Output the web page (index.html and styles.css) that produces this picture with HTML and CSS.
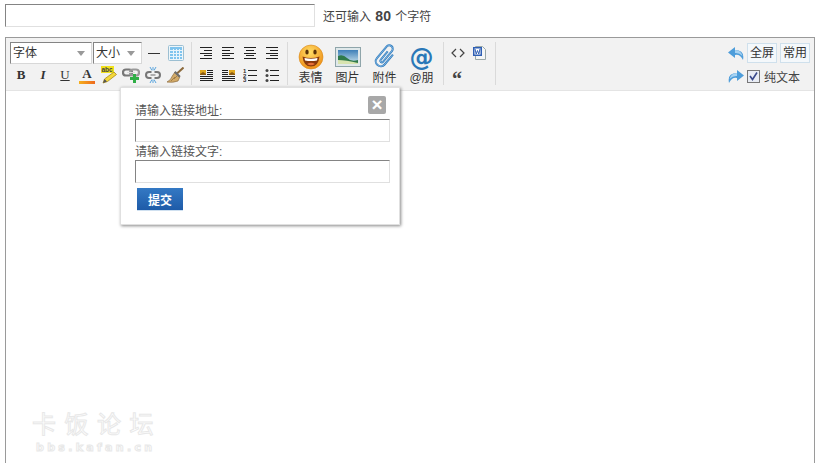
FILE: index.html
```html
<!DOCTYPE html>
<html>
<head>
    <title>发表帖子</title>
    <meta charset="UTF-8">
    <link rel="stylesheet" href="styles.css">
</head>
<body>
    <div class="title_row">
        <input class="px title_input">
        <span class="title_hint">还可输入 <strong>80</strong> 个字符</span>
    </div>

    <div class="editor">
        <div class="toolbar">
            <div class="group group_format">
                <div class="row">
                    <div class="select select_font">字体<i class="caret"></i></div>
                    <div class="select select_size">大小<i class="caret"></i></div>
                    <span class="rule_icon"></span>
                    <svg class="table_icon" width="16" height="16" viewBox="0 0 16 16">
                        <rect x=".5" y=".5" width="15" height="15" rx="1" fill="#EEF6FA" stroke="#9CBFD2"/>
                        <rect x="2" y="2" width="12" height="12" fill="#7FC4EE"/>
                        <path d="M2 5.500h12M2 8.500h12M2 11.500h12M5.500 4v10M8.500 4v10M11.500 4v10" stroke="#E8F4FB"/>
                    </svg>
                </div>
                <div class="row row_small">
                    <b class="cell glyph">B</b>
                    <i class="cell glyph">I</i>
                    <u class="cell glyph">U</u>
                    <span class="cell color_a">A<i class="color_bar"></i></span>
                    <span class="cell">
                        <svg width="18" height="18" viewBox="0 0 18 18">
                            <rect x="1" y="0" width="13" height="7" fill="#F2E21C"/>
                            <text x="1.500" y="5.800" class="abc">abc</text>
                            <path d="M3 17l1.500-4L14 6l2.500 2.500-9 7z" fill="#F4D83A" stroke="#A88A1C" stroke-width=".8"/>
                            <path d="M3 17l1.500-4 2.500 2.500z" fill="#555"/>
                        </svg>
                    </span>
                    <span class="cell">
                        <svg width="18" height="16" viewBox="0 0 18 16">
                            <rect x="1" y="2.500" width="9" height="6" rx="3" fill="none" stroke="#777" stroke-width="2.200"/>
                            <rect x="8" y="2.500" width="9" height="6" rx="3" fill="none" stroke="#999" stroke-width="2.200"/>
                            <path d="M5 5.500h8" stroke="#DDD"/>
                            <path d="M11 7h3v3h3v3h-3v3h-3v-3H8v-3h3z" fill="#2FAE46"/>
                        </svg>
                    </span>
                    <span class="cell">
                        <svg width="16" height="16" viewBox="0 0 16 16">
                            <path d="M6.500 5H4a3 3 0 0 0 0 6h2.500M9.500 5H12a3 3 0 0 1 0 6H9.500" fill="none" stroke="#777" stroke-width="2"/>
                            <path d="M5.500 8h5" stroke="#999" stroke-width="1.500"/>
                            <path d="M5 0l2 3.500M11 0L9 3.500M5 16l2-3.500M11 16l-2-3.500M8 0v3M8 13v3" stroke="#5AA5DE"/>
                        </svg>
                    </span>
                    <span class="cell">
                        <svg width="18" height="16" viewBox="0 0 18 16">
                            <path d="M17.500 .5l-6.500 6" stroke="#8C6A3C" stroke-width="2"/>
                            <path d="M9 5l5 4.500-2 4.500q-5 2-11 1 4-2 5-5.500z" fill="#D2AA68" stroke="#8C6A3C" stroke-width=".7"/>
                            <path d="M8 12l3-3M5 14l4-4" stroke="#8C6A3C" stroke-width=".7"/>
                            <path d="M9.500 4l5 5-1.500 1.500-5-5z" fill="#6C6C6C"/>
                        </svg>
                    </span>
                </div>
            </div>

            <div class="group group_align">
                <div class="row">
                    <span class="cell"><i class="lines lines_right"></i></span>
                    <span class="cell"><i class="lines lines_left"></i></span>
                    <span class="cell"><i class="lines lines_center"></i></span>
                    <span class="cell"><i class="lines lines_right"></i></span>
                </div>
                <div class="row row_small">
                    <span class="cell">
                        <svg width="13" height="13" viewBox="0 0 13 13">
                            <rect x="0" y="1" width="6" height="5" fill="#E0A820"/>
                            <path d="M0 5l3-2 3 2v1H0z" fill="#8A5A14"/>
                            <path d="M7 1.500h6M7 3.500h6M7 5.500h6M0 7.500h13M0 9.500h13M0 11.500h13" stroke="#222"/>
                        </svg>
                    </span>
                    <span class="cell">
                        <svg width="13" height="13" viewBox="0 0 13 13">
                            <rect x="7" y="1" width="6" height="5" fill="#E0A820"/>
                            <path d="M7 5l3-2 3 2v1H7z" fill="#8A5A14"/>
                            <path d="M0 1.500h6M0 3.500h6M0 5.500h6M0 7.500h13M0 9.500h13M0 11.500h13" stroke="#222"/>
                        </svg>
                    </span>
                    <span class="cell">
                        <svg width="14" height="14" viewBox="0 0 14 14">
                            <text x="0" y="4.500" class="num">1</text>
                            <text x="0" y="9.500" class="num">2</text>
                            <text x="0" y="14" class="num">3</text>
                            <path d="M5 2.500h9M5 7.500h9M5 12.500h9" stroke="#222"/>
                        </svg>
                    </span>
                    <span class="cell">
                        <svg width="14" height="14" viewBox="0 0 14 14">
                            <circle cx="2" cy="2.500" r="1.500" fill="#444"/>
                            <circle cx="2" cy="7.500" r="1.500" fill="#444"/>
                            <circle cx="2" cy="12.500" r="1.500" fill="#444"/>
                            <path d="M5 2.500h9M5 7.500h9M5 12.500h9" stroke="#222"/>
                        </svg>
                    </span>
                </div>
            </div>

            <div class="group group_big">
                <div class="big_btn">
                    <svg width="26" height="26" viewBox="0 0 26 26">
                        <defs>
                            <radialGradient id="face" cx=".45" cy=".3" r=".75">
                                <stop offset="0" stop-color="#FFDE66"/>
                                <stop offset="1" stop-color="#EE8A12"/>
                            </radialGradient>
                        </defs>
                        <circle cx="13" cy="13" r="12" fill="url(#face)" stroke="#D98A1C" stroke-width=".6"/>
                        <ellipse cx="9" cy="8" rx="1.700" ry="2.600" fill="#5A3208"/>
                        <ellipse cx="17" cy="8" rx="1.700" ry="2.600" fill="#5A3208"/>
                        <path d="M4.500 12.500q8.500 3 17 0-1 10-8.500 10t-8.500-10z" fill="#8A3A0C"/>
                        <path d="M6.500 14q6.500 1.500 13 0l-.5 2.500q-6 1-12 0z" fill="#FFF"/>
                        <path d="M9 20q4-2.500 8 0-4 2.500-8 0z" fill="#E8703A"/>
                    </svg>
                    <span>表情</span>
                </div>
                <div class="big_btn">
                    <svg width="26" height="26" viewBox="0 0 26 26">
                        <defs>
                            <linearGradient id="sky" x1="0" y1="0" x2="0" y2="1">
                                <stop offset="0" stop-color="#3D7FB8"/>
                                <stop offset="1" stop-color="#CFE6EE"/>
                            </linearGradient>
                        </defs>
                        <rect x=".5" y="3.500" width="25" height="19" fill="#DFE8EA" stroke="#8FA5AA"/>
                        <rect x="3" y="6" width="20" height="14" fill="url(#sky)"/>
                        <path d="M3 12q5-2 9 2t11 2v4H3z" fill="#2F7A4A"/>
                        <path d="M3 16q8 0 20 3v1H3z" fill="#D8E4B0"/>
                    </svg>
                    <span>图片</span>
                </div>
                <div class="big_btn">
                    <svg width="26" height="26" viewBox="0 0 26 26">
                        <g transform="rotate(40 13 13)" fill="none">
                            <path d="M17.500 6v13a5 5 0 0 1-10 0V4a3.500 3.500 0 0 1 7 0v14a1.500 1.500 0 0 1-3 0V7" stroke="#2A78BC" stroke-width="2"/>
                            <path d="M17.500 6v13a5 5 0 0 1-10 0V4a3.500 3.500 0 0 1 7 0v14a1.500 1.500 0 0 1-3 0V7" stroke="#A8D0F0" stroke-width=".6"/>
                        </g>
                    </svg>
                    <span>附件</span>
                </div>
                <div class="big_btn">
                    <span class="at_icon">@</span>
                    <span>@朋</span>
                </div>
            </div>

            <div class="group group_misc">
                <div class="row">
                    <span class="cell code_icon">
                        <svg width="14" height="10" viewBox="0 0 14 10"><path d="M5 1L1 5l4 4M9 1l4 4-4 4" fill="none" stroke="#444" stroke-width="1.200"/></svg>
                    </span>
                    <span class="cell">
                        <svg width="14" height="16" viewBox="0 0 14 16">
                            <path d="M3.500 1.500h7l3 3v10h-10z" fill="#F4F6F6" stroke="#9AA8A8"/>
                            <rect x="1" y="2" width="9" height="9" fill="#2F5FB4"/>
                            <rect x="2.500" y="3.500" width="6" height="6" fill="#FFF"/>
                            <path d="M3 4l1.200 5 1.300-3.500L6.800 9 8 4" fill="none" stroke="#2F5FB4"/>
                        </svg>
                    </span>
                </div>
                <div class="row row_small">
                    <span class="cell quote_icon">“</span>
                </div>
            </div>

            <div class="group_right">
                <div class="row">
                    <svg class="arrow" width="16" height="13" viewBox="0 0 16 13"><path d="M7 0L0 5.500 7 11V8q5-1 8 5 2-10-8-10z" fill="#4E9DDA"/><path d="M7 3q6 0 7.500 6Q11 5.500 7 6z" fill="#A6D2F2"/></svg>
                    <span class="mode_btn">全屏</span>
                    <span class="mode_btn">常用</span>
                </div>
                <div class="row row_plain">
                    <svg class="arrow" width="16" height="13" viewBox="0 0 16 13"><path d="M9 0l7 5.500L9 11V8q-5-1-8 5-2-10 8-10z" fill="#4E9DDA"/><path d="M9 3Q3 3 1.500 9 5 5.500 9 6z" fill="#A6D2F2"/></svg>
                    <span class="check">
                        <svg width="9" height="9" viewBox="0 0 9 9"><path d="M1 4l2.500 3.500L8 .5" fill="none" stroke="#3A4A8C" stroke-width="1.600"/></svg>
                    </span>
                    <span class="plain_label">纯文本</span>
                </div>
            </div>
        </div>

        <div class="area">
            <div class="watermark">
                <div class="wm_cn">卡饭论坛</div>
                <div class="wm_en">bbs.kafan.cn</div>
            </div>
        </div>

        <div class="link_pop">
            <span class="pop_close">×</span>
            <label>请输入链接地址:</label>
            <input class="px pop_input">
            <label>请输入链接文字:</label>
            <input class="px pop_input">
            <button class="pop_submit">提交</button>
        </div>
    </div>
</body>
</html>
```

FILE: styles.css
```css
html, body {
    height: 100%;
}
body {
    margin: 0;
    overflow: hidden;
    background-color: #FFF;
    font-family: "Liberation Sans", "Noto Sans CJK SC", sans-serif;
    font-size: 12px;
    color: #444;
}
svg {
    display: block;
}
.px {
    box-sizing: border-box;
    margin: 0;
    padding: 0;
    background-color: #FFF;
    border: 1px solid #E0E0E0;
    border-top-color: #848484;
    border-left-color: #848484;
}
.title_row {
    display: flex;
    align-items: center;
    height: 23px;
    padding: 4px 0 0 5px;
}
.title_input {
    width: 310px;
    height: 23px;
}
.title_hint {
    margin-left: 8px;
}
.title_hint strong {
    margin: 0 1px;
    font-size: 14px;
}

.editor {
    position: relative;
    box-sizing: border-box;
    width: 810px;
    height: 426px;
    margin: 10px 0 0 5px;
    border: 1px solid #9A9A9A;
    border-bottom: 0;
}
.toolbar {
    display: flex;
    box-sizing: border-box;
    height: 53px;
    padding: 4px 0 0 4px;
    background-color: #F2F2F2;
    border-bottom: 1px solid #E4E4E4;
}
.group {
    height: 43px;
    border-right: 1px solid #DADADA;
}
.row {
    display: flex;
    align-items: center;
    height: 22px;
}
.row_small {
    height: 20px;
    margin-top: 1px;
}
.cell {
    display: flex;
    flex: none;
    align-items: center;
    justify-content: center;
    width: 22px;
    height: 20px;
    font-style: normal;
}
.group_format {
    width: 181px;
}
.select {
    position: relative;
    box-sizing: border-box;
    height: 22px;
    margin-right: 1px;
    padding: 2px 0 0 2px;
    background-color: #FFF;
    border: 1px solid #D8D8D8;
    border-top-color: #848484;
    border-left-color: #848484;
    line-height: 16px;
    color: #333;
}
.select_font {
    width: 82px;
}
.select_size {
    width: 49px;
}
.caret {
    position: absolute;
    top: 8px;
    right: 6px;
    border: 4px solid transparent;
    border-top: 5px solid #999;
    border-bottom: 0;
}
.rule_icon {
    width: 12px;
    height: 1px;
    margin-left: 5px;
    background-color: #333;
}
.table_icon {
    margin-left: 8px;
}
.glyph {
    font-family: "Liberation Serif", serif;
    font-size: 13px;
    color: #333;
}
b.glyph {
    font-weight: bold;
}
i.glyph {
    font-style: italic;
    font-weight: bold;
}
.color_a {
    position: relative;
    padding-bottom: 3px;
    box-sizing: border-box;
    font-family: "Liberation Serif", serif;
    font-size: 13px;
    font-weight: bold;
    color: #333;
}
.color_bar {
    position: absolute;
    left: 3px;
    bottom: 1px;
    width: 16px;
    height: 3px;
    background: linear-gradient(to right, #F5B01E, #EE6A1E);
}
.abc {
    font-family: "Liberation Sans", sans-serif;
    font-size: 6.500px;
    font-weight: bold;
    fill: #444;
}
.num {
    font-family: "Liberation Sans", sans-serif;
    font-size: 6px;
    font-weight: bold;
    fill: #333;
}

.group_align {
    width: 92px;
    padding-left: 3px;
}
.lines {
    display: block;
    width: 12px;
    height: 12px;
    background-repeat: no-repeat;
    background-image:
        linear-gradient(#222, #222),
        linear-gradient(#222, #222),
        linear-gradient(#222, #222),
        linear-gradient(#222, #222),
        linear-gradient(#222, #222);
    background-size: 12px 1px, 8px 1px, 12px 1px, 8px 1px, 12px 1px;
}
.lines_left {
    background-position: 0 0, 0 3px, 0 6px, 0 8px, 0 11px;
}
.lines_center {
    background-position: 0 0, 2px 3px, 0 6px, 2px 8px, 0 11px;
}
.lines_right {
    background-position: 0 0, 4px 3px, 0 6px, 4px 8px, 0 11px;
}

.group_big {
    display: flex;
    width: 151px;
    padding-left: 4px;
}
.big_btn {
    display: flex;
    flex-direction: column;
    align-items: center;
    width: 37px;
    padding-top: 2px;
    color: #333;
    line-height: 14px;
}
.big_btn svg {
    height: 26px;
    margin-bottom: 1px;
}
.at_icon {
    height: 24px;
    margin: 2px 0 1px;
    font-family: "DejaVu Sans", sans-serif;
    font-size: 24px;
    font-weight: bold;
    line-height: 24px;
    color: #2A78B8;
}

.group_misc {
    width: 47px;
    padding-left: 4px;
}
.code_icon {
    width: 20px;
}
.quote_icon {
    box-sizing: border-box;
    width: 18px;
    padding-top: 8px;
    font-family: "Liberation Serif", serif;
    font-size: 20px;
    font-weight: bold;
    line-height: 27px;
    color: #444;
}

.group_right {
    margin-left: auto;
    padding-right: 4px;
}
.group_right .row {
    width: 82px;
    gap: 3px;
}
.group_right .row_plain {
    margin-top: 1px;
}
.mode_btn {
    box-sizing: border-box;
    width: 30px;
    height: 20px;
    background-color: #F4F8FB;
    border: 1px solid #CFE0EC;
    text-align: center;
    line-height: 18px;
    color: #333;
}
.check {
    display: flex;
    align-items: center;
    justify-content: center;
    box-sizing: border-box;
    width: 13px;
    height: 13px;
    background-color: #E8ECF4;
    border: 1px solid #777;
}
.plain_label {
    margin-left: 1px;
}

.area {
    position: relative;
    height: 372px;
    background-color: #FFF;
}
.watermark {
    position: absolute;
    left: 26px;
    bottom: 8px;
    color: #FFF;
    -webkit-text-stroke: 1px #E8E8E8;
}
.wm_cn {
    font-family: "Noto Sans CJK SC", sans-serif;
    font-size: 24px;
    line-height: 30px;
    letter-spacing: 8.500px;
}
.wm_en {
    margin: 2px 0 0 4px;
    font-family: "DejaVu Sans", sans-serif;
    font-size: 11px;
    font-weight: bold;
    line-height: 15px;
    letter-spacing: 3.300px;
}

.link_pop {
    position: absolute;
    left: 114px;
    top: 49px;
    box-sizing: border-box;
    width: 280px;
    height: 138px;
    padding: 15px 10px 0 14px;
    background-color: #FFF;
    border: 1px solid #E0E0E0;
    box-shadow: 1px 1px 3px #888;
}
.link_pop label {
    display: block;
    height: 16px;
    line-height: 16px;
    color: #555;
}
.pop_input {
    display: block;
    width: 255px;
    height: 23px;
    margin-bottom: 2px;
}
.pop_close {
    position: absolute;
    top: 8px;
    right: 13px;
    width: 18px;
    height: 18px;
    background-color: #A8A8A8;
    border-radius: 2px;
    text-align: center;
    font-size: 19px;
    font-weight: bold;
    line-height: 18px;
    color: #FFF;
}
.pop_submit {
    display: block;
    width: 46px;
    height: 23px;
    margin: 5px 0 0 2px;
    padding: 0;
    background: linear-gradient(#3479C4, #1E5BA8);
    border: 0;
    border-bottom: 1px solid #CFE0F0;
    font-family: "Noto Sans CJK SC", sans-serif;
    font-size: 12px;
    font-weight: bold;
    color: #FFF;
}
```
